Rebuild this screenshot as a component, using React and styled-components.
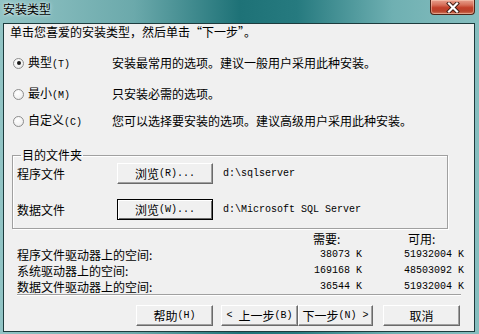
import React from "react";
import styled, { createGlobalStyle } from "styled-components";

const Global = createGlobalStyle`
  html, body { margin: 0; padding: 0; }
  body {
    font-family: "Noto Sans CJK SC", "Noto Sans", sans-serif;
    font-size: 12px;
    color: #000;
    background: #fff;
  }
`;

const Window = styled.div`
  width: 479px;
  height: 334px;
  display: flex;
  flex-direction: column;
  box-sizing: border-box;
  background: linear-gradient(90deg, #92c4c5 0%, #6ba9ab 28%, #1e7277 50%, #267a7f 62%, #6fb0b2 82%, #86bebf 100%);
`;

const TitleBar = styled.div`
  height: 23px;
  flex: none;
  display: flex;
  justify-content: space-between;
  align-items: flex-start;
  padding: 0 4px 0 3px;
  box-sizing: border-box;
`;

const Title = styled.div`
  font-size: 12px;
  line-height: 14px;
  padding-top: 2px;
  color: #000;
  text-shadow: 0 0 4px rgba(255, 255, 255, 0.8), 0 0 2px rgba(255, 255, 255, 0.6);
`;

const CloseButton = styled.div`
  width: 45px;
  height: 15px;
  box-sizing: border-box;
  border: 1px solid #4e2418;
  border-top: none;
  border-radius: 0 0 4px 4px;
  background: linear-gradient(180deg, #e8a08e 0%, #d6705a 35%, #c2402a 55%, #b9432c 80%, #d07a5e 100%);
  display: flex;
  align-items: center;
  justify-content: center;
  box-shadow: inset 0 0 0 1px rgba(255, 220, 200, 0.45);
`;

const Client = styled.div`
  flex: 1;
  margin: 0 4px 2px 3px;
  border: 1px solid #1d3b3d;
  background: #f0f0f0;
  display: flex;
  flex-direction: column;
  box-sizing: border-box;
`;

const Heading = styled.div`
  margin: 1px 0 0 6px;
  line-height: 14px;
  height: 14px;
`;

const Latin = styled.span`
  font-family: "Liberation Mono", "DejaVu Sans Mono", monospace;
  font-size: 10px;
`;

const OptionRow = styled.div`
  display: flex;
  align-items: center;
  height: 16px;
  margin-top: ${(p) => p.$gap}px;
  margin-left: 9px;
`;

const Radio = styled.span`
  width: 11px;
  height: 11px;
  flex: none;
  box-sizing: border-box;
  border-radius: 50%;
  border: 1px solid #8d8d8d;
  background: radial-gradient(circle at 40% 35%, #ffffff 0%, #f4f4f4 55%, #dcdcdc 100%);
  display: flex;
  align-items: center;
  justify-content: center;
  &::after {
    content: "";
    width: 4px;
    height: 4px;
    border-radius: 50%;
    background: ${(p) => (p.$checked ? "#1a1a1a" : "transparent")};
  }
`;

const OptionLabel = styled.span`
  width: 84px;
  margin-left: 4px;
  flex: none;
  line-height: 14px;
`;

const OptionDesc = styled.span`
  line-height: 14px;
`;

const GroupBox = styled.fieldset`
  margin: 19px 0 0 8px;
  width: 436px;
  box-sizing: border-box;
  padding: 0 0 8px 4px;
  border: 1px solid #a0a0a0;
  box-shadow: 1px 1px 0 #ffffff, inset 1px 1px 0 #ffffff;
  min-inline-size: 0;
`;

const Legend = styled.legend`
  padding: 0 1px;
  margin-left: 4px;
  line-height: 14px;
`;

const PathGrid = styled.div`
  display: grid;
  grid-template-columns: 90px 96px auto;
  column-gap: 10px;
  row-gap: 15px;
  align-items: center;
  margin-top: 1px;
`;

const FieldLabel = styled.span`
  line-height: 14px;
`;

const PathText = styled.span`
  font-family: "Liberation Mono", "DejaVu Sans Mono", monospace;
  font-size: 10px;
  line-height: 14px;
`;

const Button = styled.button`
  height: 21px;
  width: ${(p) => p.$w || 76}px;
  box-sizing: border-box;
  padding: 0;
  margin: 0;
  font-family: inherit;
  font-size: 12px;
  line-height: 14px;
  color: #000;
  background: #f0f0f0;
  border-style: solid;
  border-width: 1px;
  border-color: ${(p) =>
    p.$default ? "#000 #000 #000 #000" : "#ffffff #6a6a6a #6a6a6a #ffffff"};
  box-shadow: ${(p) =>
    p.$default
      ? "inset 1px 1px 0 #ffffff, inset -1px -1px 0 #6a6a6a"
      : "inset -1px -1px 0 #a0a0a0"};
  display: flex;
  align-items: center;
  justify-content: center;
  cursor: default;
`;

const SpaceGrid = styled.div`
  display: grid;
  grid-template-columns: 283px 62px 102px;
  grid-template-rows: 17px 16px 16px 15px;
  margin: 1px 0 0 13px;
  align-items: center;
  line-height: 14px;
`;

const HeadCell = styled.span`
  padding-left: ${(p) => p.$pad}px;
`;

const SpaceLabel = styled.span`
  line-height: 14px;
`;

const Num = styled.span`
  font-family: "Liberation Mono", "DejaVu Sans Mono", monospace;
  font-size: 10px;
  text-align: right;
`;

const Separator = styled.div`
  margin: 0 0 0 13px;
  width: 444px;
  height: 1px;
  background: #a0a0a0;
  border-bottom: 1px solid #ffffff;
`;

const ButtonBar = styled.div`
  display: flex;
  justify-content: flex-end;
  margin-top: 9px;
  padding-right: 14px;
`;

const Spacer = styled.span`
  width: ${(p) => p.$w}px;
  flex: none;
`;

function CloseGlyph() {
  return (
    <svg width="14" height="11" viewBox="0 0 14 11">
      <path d="M3 1.5 L11 9.5 M11 1.5 L3 9.5" stroke="#3a1a12" strokeWidth="4" strokeLinecap="square" />
      <path d="M3 1.5 L11 9.5 M11 1.5 L3 9.5" stroke="#ffffff" strokeWidth="2.2" strokeLinecap="square" />
    </svg>
  );
}

export default function App() {
  return (
    <>
      <Global />
      <Window>
        <TitleBar>
          <Title>安装类型</Title>
          <CloseButton>
            <CloseGlyph />
          </CloseButton>
        </TitleBar>
        <Client>
          <Heading>单击您喜爱的安装类型，然后单击“下一步”。</Heading>

          <OptionRow $gap={16}>
            <Radio $checked />
            <OptionLabel>
              典型<Latin>(T)</Latin>
            </OptionLabel>
            <OptionDesc>安装最常用的选项。建议一般用户采用此种安装。</OptionDesc>
          </OptionRow>
          <OptionRow $gap={15}>
            <Radio />
            <OptionLabel>
              最小<Latin>(M)</Latin>
            </OptionLabel>
            <OptionDesc>只安装必需的选项。</OptionDesc>
          </OptionRow>
          <OptionRow $gap={11}>
            <Radio />
            <OptionLabel>
              自定义<Latin>(C)</Latin>
            </OptionLabel>
            <OptionDesc>您可以选择要安装的选项。建议高级用户采用此种安装。</OptionDesc>
          </OptionRow>

          <GroupBox>
            <Legend>目的文件夹</Legend>
            <PathGrid>
              <FieldLabel>程序文件</FieldLabel>
              <Button $w={96}>
                浏览<Latin>(R)...</Latin>
              </Button>
              <PathText>d:\sqlserver</PathText>
              <FieldLabel>数据文件</FieldLabel>
              <Button $w={96} $default>
                浏览<Latin>(W)...</Latin>
              </Button>
              <PathText>d:\Microsoft SQL Server</PathText>
            </PathGrid>
          </GroupBox>

          <SpaceGrid>
            <span />
            <HeadCell $pad={13}>需要:</HeadCell>
            <HeadCell $pad={46}>可用:</HeadCell>
            <SpaceLabel>程序文件驱动器上的空间:</SpaceLabel>
            <Num>38073 K</Num>
            <Num>51932004 K</Num>
            <SpaceLabel>系统驱动器上的空间:</SpaceLabel>
            <Num>169168 K</Num>
            <Num>48503092 K</Num>
            <SpaceLabel>数据文件驱动器上的空间:</SpaceLabel>
            <Num>36544 K</Num>
            <Num>51932004 K</Num>
          </SpaceGrid>

          <Separator />

          <ButtonBar>
            <Button $w={77}>
              帮助<Latin>(H)</Latin>
            </Button>
            <Spacer $w={8} />
            <Button $w={77}>
              <Latin>&lt;&nbsp;</Latin>上一步<Latin>(B)</Latin>
            </Button>
            <Button $w={75}>
              下一步<Latin>(N)&nbsp;&gt;</Latin>
            </Button>
            <Spacer $w={10} />
            <Button $w={77}>取消</Button>
          </ButtonBar>
        </Client>
      </Window>
    </>
  );
}
